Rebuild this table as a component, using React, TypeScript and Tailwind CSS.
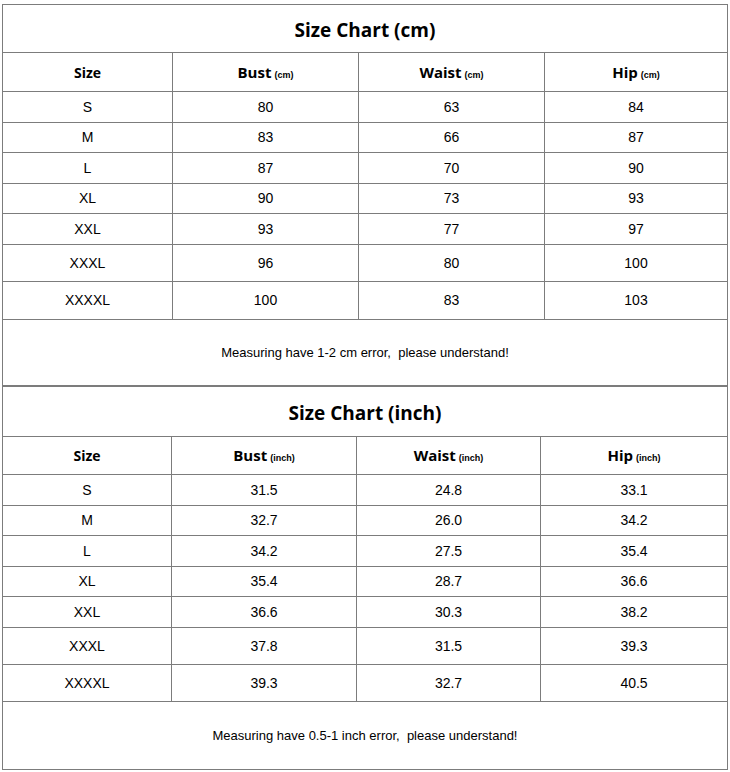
const CM_ROWS = [
  { size: 'S', bust: '80', waist: '63', hip: '84', h: 'h-[31px]' },
  { size: 'M', bust: '83', waist: '66', hip: '87', h: 'h-[30px]' },
  { size: 'L', bust: '87', waist: '70', hip: '90', h: 'h-[31px]' },
  { size: 'XL', bust: '90', waist: '73', hip: '93', h: 'h-[30px]' },
  { size: 'XXL', bust: '93', waist: '77', hip: '97', h: 'h-[31px]' },
  { size: 'XXXL', bust: '96', waist: '80', hip: '100', h: 'h-[37px]' },
  { size: 'XXXXL', bust: '100', waist: '83', hip: '103', h: 'h-[38px]' },
]

const INCH_ROWS = [
  { size: 'S', bust: '31.5', waist: '24.8', hip: '33.1', h: 'h-[31px]' },
  { size: 'M', bust: '32.7', waist: '26.0', hip: '34.2', h: 'h-[30px]' },
  { size: 'L', bust: '34.2', waist: '27.5', hip: '35.4', h: 'h-[31px]' },
  { size: 'XL', bust: '35.4', waist: '28.7', hip: '36.6', h: 'h-[30px]' },
  { size: 'XXL', bust: '36.6', waist: '30.3', hip: '38.2', h: 'h-[31px]' },
  { size: 'XXXL', bust: '37.8', waist: '31.5', hip: '39.3', h: 'h-[37px]' },
  { size: 'XXXXL', bust: '39.3', waist: '32.7', hip: '40.5', h: 'h-[37px]' },
]

type Row = { size: string; bust: string; waist: string; hip: string; h: string }

function Cell({ children, last }: { children: React.ReactNode; last?: boolean }) {
  return (
    <div className={`flex items-center justify-center ${last ? '' : 'border-r border-[#7c7c7c]'}`}>
      {children}
    </div>
  )
}

function Head({ label, unit }: { label: string; unit: string }) {
  return (
    <span className="flex items-baseline gap-[3px]">
      <span className="font-['Open_Sans',sans-serif] text-[15px] font-bold">{label}</span>
      <span className="font-['Liberation_Sans',sans-serif] text-[9px] font-bold">({unit})</span>
    </span>
  )
}

function Chart({ unit, rows, cols, titleH, headH, noteH, note, bottom }: {
  unit: string
  rows: Row[]
  cols: string
  titleH: string
  headH: string
  noteH: string
  note: string
  bottom: string
}) {
  return (
    <div className={`border-x border-[#7c7c7c] ${bottom}`}>
      <div className={`${titleH} flex items-center justify-center border-b border-[#7c7c7c] pt-[3px]`}>
        <span className="font-['Open_Sans',sans-serif] text-[19px] font-bold">Size Chart ({unit})</span>
      </div>
      <div className={`grid ${cols} ${headH} border-b border-[#7c7c7c]`}>
        <Cell><span className="font-['Open_Sans',sans-serif] text-[14px] font-bold">Size</span></Cell>
        <Cell><Head label="Bust" unit={unit} /></Cell>
        <Cell><Head label="Waist" unit={unit} /></Cell>
        <Cell last><Head label="Hip" unit={unit} /></Cell>
      </div>
      {rows.map(r => (
        <div key={r.size} className={`grid ${cols} ${r.h} border-b border-[#7c7c7c] text-[14px]`}>
          <Cell>{r.size}</Cell>
          <Cell>{r.bust}</Cell>
          <Cell>{r.waist}</Cell>
          <Cell last>{r.hip}</Cell>
        </div>
      ))}
      <div className={`${noteH} flex items-center justify-center text-[13px]`}>
        <span className="whitespace-pre">{note}</span>
      </div>
    </div>
  )
}

export default function App() {
  return (
    <div className="w-[730px] h-[772px] bg-white pt-[4px] pl-[2px] font-['Liberation_Sans',Arial,sans-serif] text-black">
      <div className="w-[726px] border-t border-[#7c7c7c]">
        <Chart
          unit="cm"
          rows={CM_ROWS}
          cols="grid-cols-[170px_186px_186px_182px]"
          titleH="h-[48px]"
          headH="h-[39px]"
          noteH="h-[65px]"
          note="Measuring have 1-2 cm error,  please understand!"
          bottom="border-b-2"
        />
        <Chart
          unit="inch"
          rows={INCH_ROWS}
          cols="grid-cols-[169px_185px_184px_186px]"
          titleH="h-[50px]"
          headH="h-[38px]"
          noteH="h-[67px]"
          note="Measuring have 0.5-1 inch error,  please understand!"
          bottom="border-b"
        />
      </div>
    </div>
  )
}
